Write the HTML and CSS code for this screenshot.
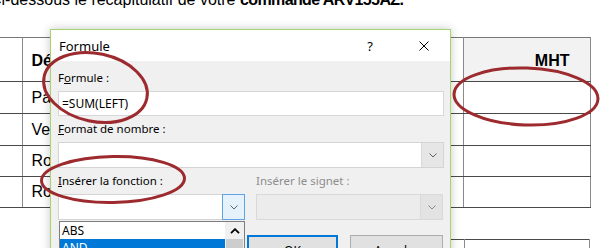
FILE: index.html
```html
<!DOCTYPE html>
<html>
	<head>
		<meta charset="UTF-8">
		<title>Formule - récapitulatif commande</title>
		<link rel="stylesheet" href="styles.css">
	</head>
	<body>
		<div class="document">
			<p class="intro">Ci-dessous le récapitulatif de votre <b>commande ARV155AZ.</b></p>
			<table class="recap">
				<colgroup>
					<col class="col_num">
					<col class="col_desig">
					<col class="col_mht">
				</colgroup>
				<tr class="recap_head">
					<td></td>
					<td>Désignation</td>
					<td class="mht">MHT</td>
				</tr>
				<tr class="row_a"><td></td><td>Papier A4</td><td></td></tr>
				<tr class="row_a"><td></td><td>Verres</td><td></td></tr>
				<tr class="row_b"><td></td><td>Rouleaux</td><td></td></tr>
				<tr class="row_b"><td></td><td>Ronds</td><td></td></tr>
			</table>
			<table class="recap_next">
				<tr><td class="next_left"></td><td class="next_right"></td></tr>
			</table>
		</div>

		<div class="dialog">
			<div class="dialog_title">
				<span class="dialog_name">Formule</span>
				<span class="dialog_help">?</span>
				<span class="dialog_close">
					<svg width="10" height="10" viewBox="0 0 10 10"><path d="M0.5 0.5 9.5 9.5 M9.5 0.5 0.5 9.5" stroke="#000" stroke-width="1" fill="none"/></svg>
				</span>
			</div>
			<div class="dialog_body">
				<label class="field_label">F<u>o</u>rmule :</label>
				<div class="textbox">=SUM(LEFT)</div>

				<label class="field_label second"><u>F</u>ormat de nombre :</label>
				<div class="combo">
					<span class="combo_text"></span>
					<span class="combo_btn">
						<svg width="8" height="5" viewBox="0 0 8 5"><path d="M0.5 0.5 4 4 7.5 0.5" stroke="#606060" stroke-width="1" fill="none"/></svg>
					</span>
				</div>

				<div class="split">
					<label class="field_label"><u>I</u>nsérer la fonction :</label>
					<label class="field_label disabled">Insérer le signet :</label>

					<div class="combo">
						<span class="combo_text"></span>
						<span class="combo_btn hover">
							<svg width="8" height="5" viewBox="0 0 8 5"><path d="M0.5 0.5 4 4 7.5 0.5" stroke="#606060" stroke-width="1" fill="none"/></svg>
						</span>
					</div>
					<div class="combo off">
						<span class="combo_text"></span>
						<span class="combo_btn">
							<svg width="8" height="5" viewBox="0 0 8 5"><path d="M0.5 0.5 4 4 7.5 0.5" stroke="#8a8a8a" stroke-width="1" fill="none"/></svg>
						</span>
					</div>

					<div class="listbox">
						<ul class="list_items">
							<li>ABS</li>
							<li class="selected">AND</li>
							<li>AVERAGE</li>
						</ul>
						<div class="scrollbar">
							<span class="scroll_up">
								<svg width="10" height="6" viewBox="0 0 10 6"><path d="M1 5.2 5 1.2 9 5.2" stroke="#000" stroke-width="1.8" fill="none"/></svg>
							</span>
							<span class="scroll_thumb"></span>
						</div>
					</div>
					<div class="buttons">
						<span class="button default">OK</span>
						<span class="button">Annuler</span>
					</div>
				</div>
			</div>
		</div>

		<svg class="marks" width="600" height="248" viewBox="0 0 600 248">
			<ellipse cx="95.5" cy="87.5" rx="52.5" ry="34" transform="rotate(12 95.5 87.5)"/>
			<ellipse cx="526" cy="96.5" rx="72" ry="28.5" transform="rotate(2 526 96.5)"/>
			<ellipse cx="113" cy="179.5" rx="71.5" ry="23" transform="rotate(-1 113 179.5)"/>
		</svg>
	</body>
</html>
```
FILE: styles.css
```css
html, body {
	margin: 0;
	overflow: hidden;
}

body {
	position: relative;
	width: 600px;
	height: 248px;
	background: #fff;
	color: #000;
	font-family: "Liberation Sans", Arial, sans-serif;
}

.intro {
	margin: -10px 0 0 -10px;
	font-size: 16px;
	line-height: 20px;
	white-space: nowrap;
}

.intro b { letter-spacing: -0.6px; }

.recap {
	margin-top: 27px;
	border-collapse: collapse;
	table-layout: fixed;
	width: 590px;
	font-size: 16px;
	line-height: 18px;
}

.col_num { width: 22px; }
.col_desig { width: 441px; }
.col_mht { width: 127px; }

.recap td {
	padding: 0 0 0 9px;
	border-top: 1px solid #4a4a4a;
	border-bottom: 1px solid #4a4a4a;
	border-left: 1px solid #8a8a8a;
	border-right: 1px solid #8a8a8a;
	vertical-align: middle;
	white-space: nowrap;
	overflow: hidden;
}

.recap td:first-child { border-left: none; }

.recap_head { height: 44px; font-weight: bold; }
.recap_head td { padding-top: 3px; border-top-color: #777; }
.recap_head .mht {
	background: #f2f2f2;
	text-align: right;
	padding-right: 20px;
}

.row_a { height: 32px; }
.row_b { height: 31px; }

.recap_next {
	margin: 31px 0 0 300px;
	border-collapse: collapse;
	table-layout: fixed;
	width: 290px;
}

.recap_next td {
	height: 30px;
	border-top: 1px solid #4a4a4a;
	border-right: 1px solid #8a8a8a;
}

.next_left { width: 162px; }

/* boite de dialogue Formule */
.dialog {
	position: absolute;
	left: 50px;
	top: 29px;
	width: 399px;
	height: 240px;
	border: 1px solid #a5d36f;
	background: #f0f0f0;
	box-shadow: 0 0 9px rgba(0, 0, 0, 0.22);
	font-family: "Noto Sans", "Open Sans", sans-serif;
	font-size: 11.5px;
	line-height: 16px;
}

.dialog_title {
	display: flex;
	align-items: center;
	height: 31px;
	background: #fff;
	font-size: 13px;
}

.dialog_name { padding-left: 8px; }

.dialog_help {
	margin-left: auto;
	margin-right: 46px;
}

.dialog_close {
	display: flex;
	margin-right: 21px;
}

.dialog_body { padding: 9px 6px 0 7px; }

.field_label {
	display: block;
	margin-bottom: 5px;
}

.field_label.second { margin-top: 5px; }
.field_label.disabled { color: #8d8d8d; }

.textbox {
	height: 23px;
	border: 1px solid #d7d7d7;
	background: #fff;
	padding-left: 3px;
	font-size: 12px;
	line-height: 23px;
}

.combo {
	display: flex;
	height: 24px;
	border: 1px solid #d4d4d4;
	background: #fff;
}

.combo_text { flex: 1; }

.combo_btn {
	display: flex;
	align-items: center;
	justify-content: center;
	width: 21px;
	background: #e6e6e6;
	border-left: 1px solid #d9d9d9;
}

.combo_btn.hover {
	background: #e5f1fb;
	border: 1px solid #5fa3e6;
	margin: -1px -1px -1px 0;
}

.combo.off { background: #ececec; border-color: #d9d9d9; }
.combo.off .combo_btn { background: #e3e3e3; }

.split {
	display: grid;
	grid-template-columns: 187px 187px;
	column-gap: 11px;
	margin-top: 5px;
}

.listbox {
	display: flex;
	margin: 1px 0 0 1px;
	height: 40px;
	border: 1px solid #7d7d7d;
	background: #fff;
	font-size: 12px;
}

.list_items {
	flex: 1;
	margin: 0;
	padding: 0;
	list-style: none;
}

.list_items li {
	height: 17px;
	line-height: 17px;
	padding-left: 2px;
}

.list_items .selected {
	background: #0078d7;
	color: #fff;
}

.scrollbar {
	display: flex;
	flex-direction: column;
	width: 19px;
	background: #f0f0f0;
}

.scroll_up {
	display: flex;
	align-items: center;
	justify-content: center;
	height: 17px;
}

.scroll_thumb {
	flex: 1;
	margin: 0 1px;
	background: #cdcdcd;
}

.buttons {
	display: flex;
	gap: 12px;
	margin: 15px 0 0 -9px;
	align-self: start;
}

.button {
	box-sizing: border-box;
	width: 93px;
	height: 27px;
	padding-top: 4px;
	border: 1px solid #adadad;
	background: #e1e1e1;
	text-align: center;
	line-height: 22px;
	font-size: 12px;
}

.button.default {
	width: 91px;
	padding-top: 3px;
	border: 2px solid #0078d7;
}

/* annotations */
.marks {
	position: absolute;
	left: 0;
	top: 0;
	pointer-events: none;
}

.marks ellipse {
	fill: none;
	stroke: #9c2a2e;
	stroke-width: 3;
}
```
